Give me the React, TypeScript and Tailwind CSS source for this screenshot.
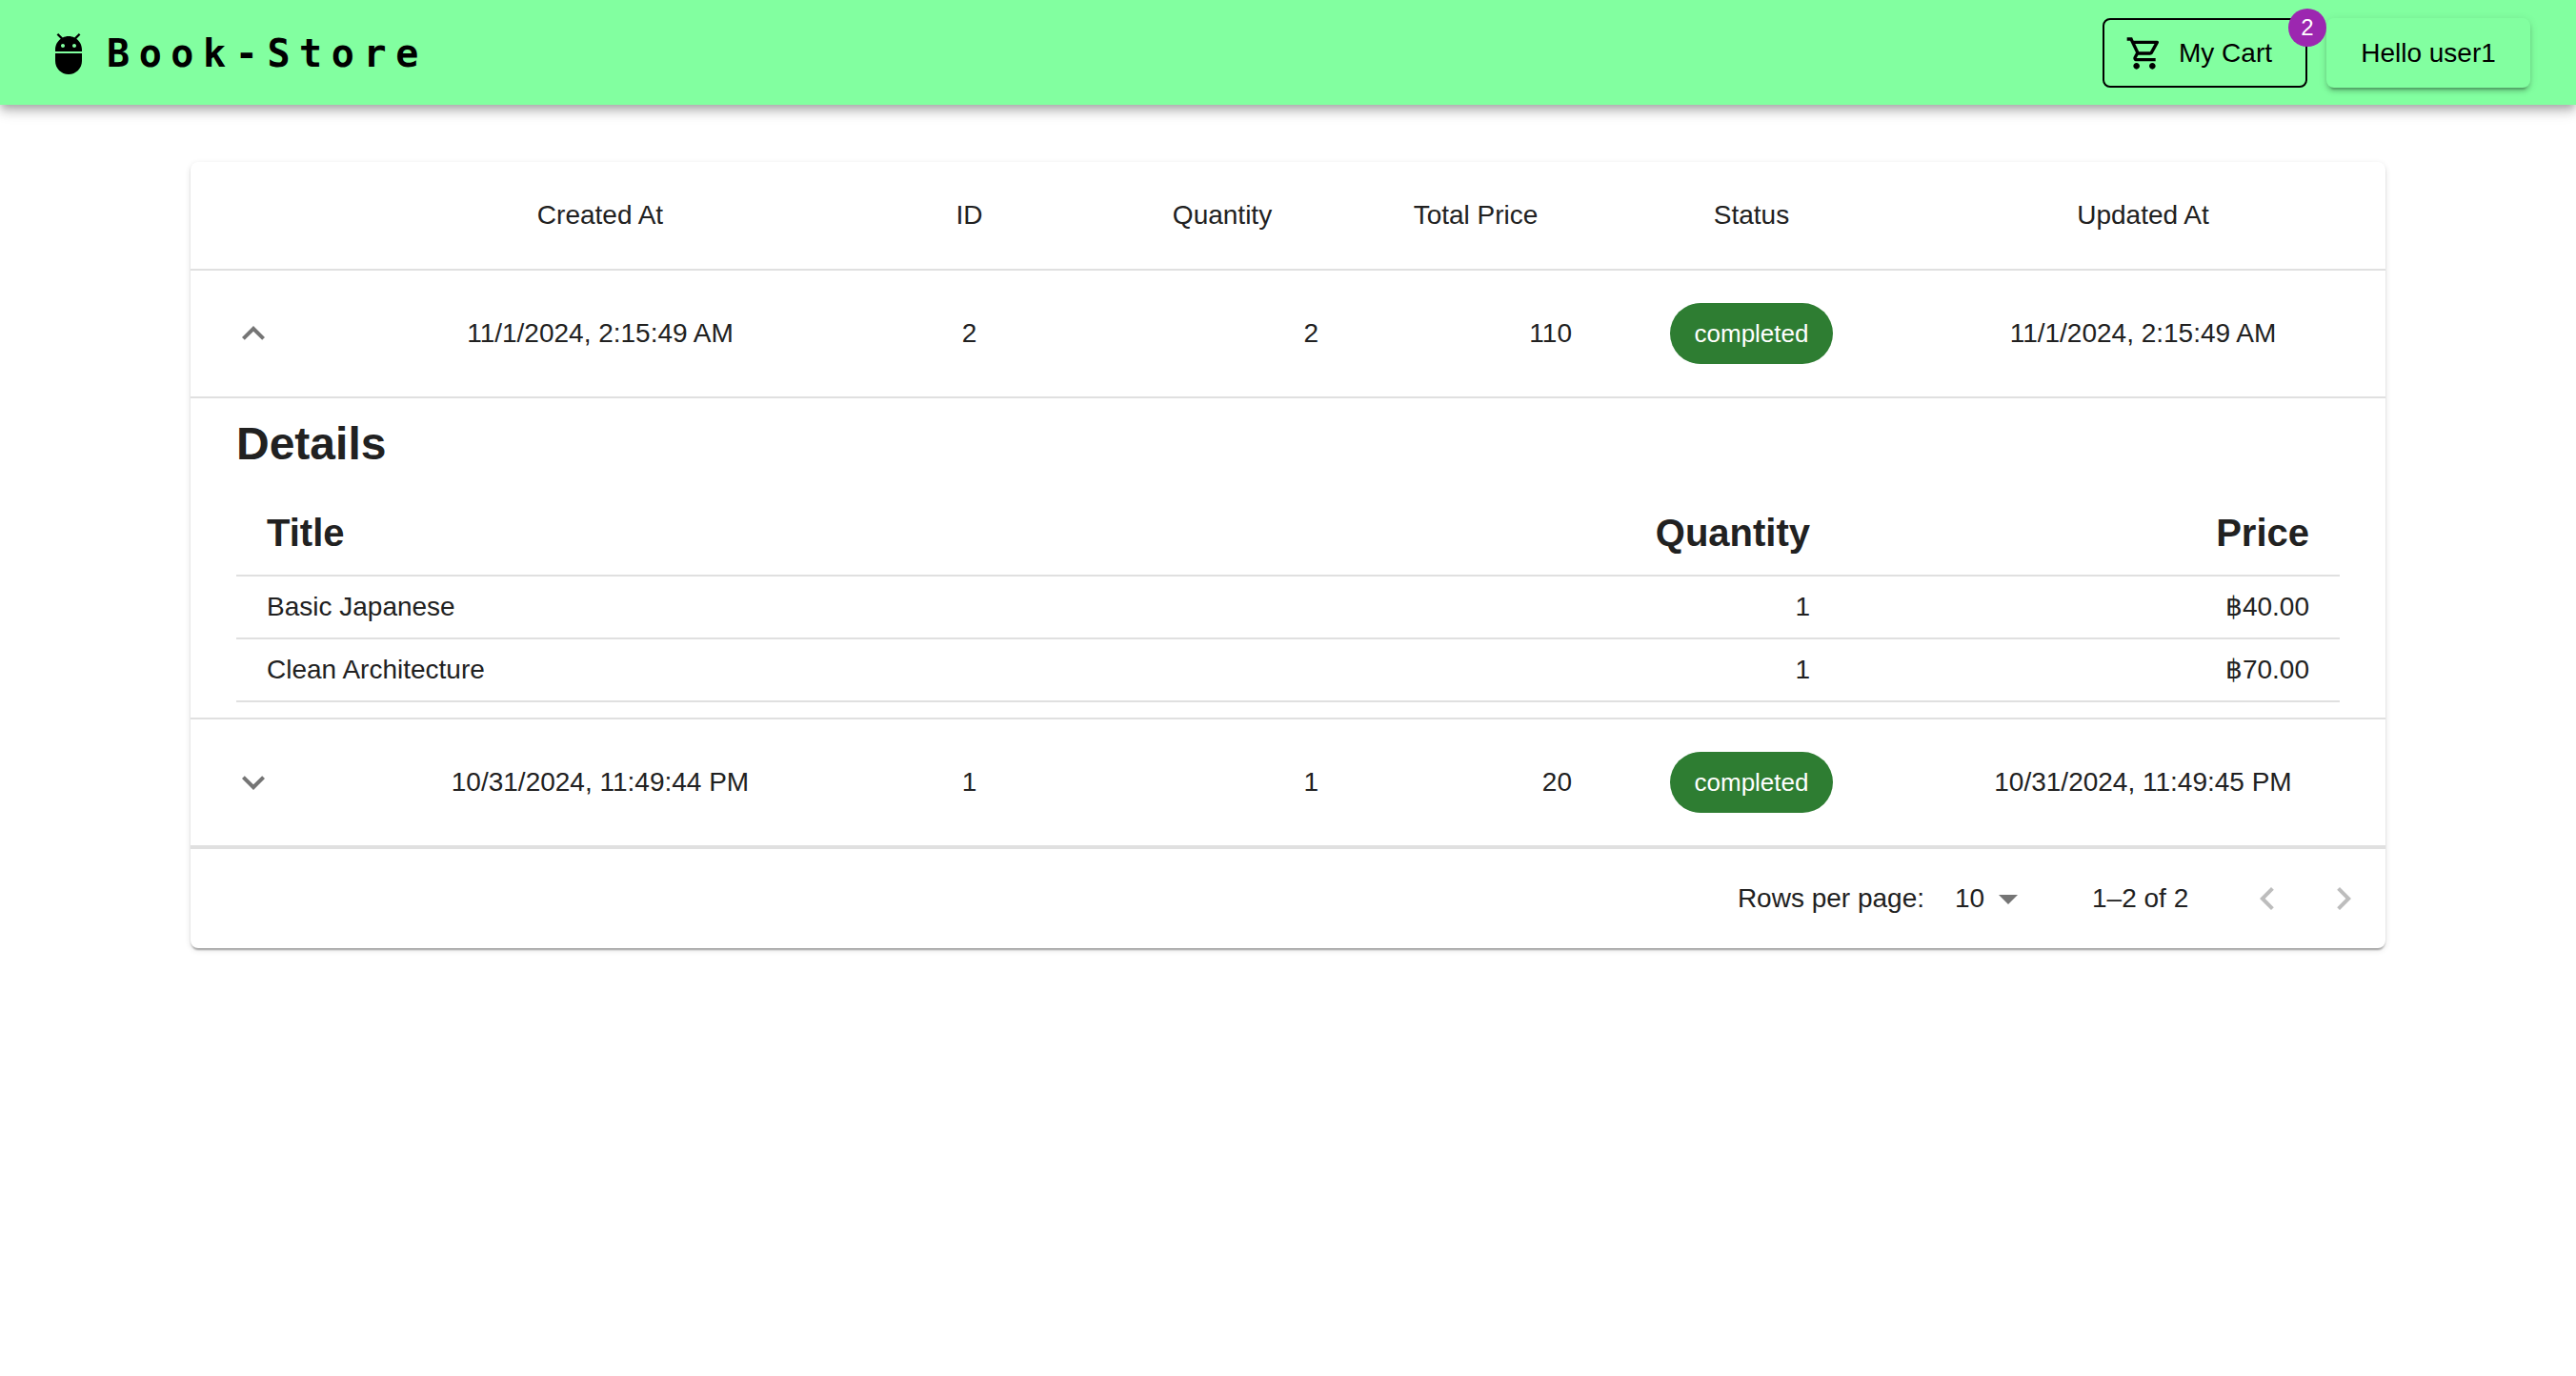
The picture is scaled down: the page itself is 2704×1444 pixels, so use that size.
import { Fragment, useState } from "react";
import {
  MdAdb,
  MdArrowDropDown,
  MdKeyboardArrowDown,
  MdKeyboardArrowLeft,
  MdKeyboardArrowRight,
  MdKeyboardArrowUp,
  MdOutlineShoppingCart,
} from "react-icons/md";

type Item = { title: string; quantity: number; price: string };
type Order = {
  id: number;
  createdAt: string;
  updatedAt: string;
  quantity: number;
  total: number;
  status: string;
  items: Item[];
};

const orders: Order[] = [
  {
    id: 2,
    createdAt: "11/1/2024, 2:15:49 AM",
    updatedAt: "11/1/2024, 2:15:49 AM",
    quantity: 2,
    total: 110,
    status: "completed",
    items: [
      { title: "Basic Japanese", quantity: 1, price: "฿40.00" },
      { title: "Clean Architecture", quantity: 1, price: "฿70.00" },
    ],
  },
  {
    id: 1,
    createdAt: "10/31/2024, 11:49:44 PM",
    updatedAt: "10/31/2024, 11:49:45 PM",
    quantity: 1,
    total: 20,
    status: "completed",
    items: [],
  },
];

function Header() {
  return (
    <header className="flex h-[110px] items-center justify-between bg-[#82ffa0] px-12 pt-px text-black shadow-[0_4px_8px_-2px_rgba(0,0,0,0.2),0_8px_10px_0_rgba(0,0,0,0.14),0_2px_20px_0_rgba(0,0,0,0.12)]">
      <a href="#" className="flex items-center gap-4">
        <MdAdb className="size-12" />
        <span className="font-['DejaVu_Sans_Mono',monospace] text-[40px] leading-[64px] font-bold tracking-[0.24em]">
          Book-Store
        </span>
      </a>
      <div className="flex items-center gap-5">
        <div className="relative">
          <button
            type="button"
            className="flex h-[73px] w-[215px] items-center gap-4 rounded-lg border-2 border-black pl-[22px] text-[28px]"
          >
            <MdOutlineShoppingCart className="size-10" />
            My Cart
          </button>
          <span className="absolute -top-[10px] -right-5 flex size-10 items-center justify-center rounded-full bg-[#9c27b0] text-2xl text-white">
            2
          </span>
        </div>
        <button
          type="button"
          className="h-[73px] w-[214px] rounded-lg bg-[#82ffa0] text-[28px] shadow-[0_6px_2px_-4px_rgba(0,0,0,0.2),0_4px_4px_0_rgba(0,0,0,0.14),0_2px_10px_0_rgba(0,0,0,0.12)]"
        >
          Hello user1
        </button>
      </div>
    </header>
  );
}

function Details({ items }: { items: Item[] }) {
  return (
    <div className="px-4 pt-4 pb-4">
      <h2 className="mb-[17px] text-5xl leading-[64px] font-bold">Details</h2>
      <table className="w-full table-fixed border-separate border-spacing-0">
        <colgroup>
          <col className="w-[1100px]" />
          <col className="w-[584px]" />
          <col className="w-[524px]" />
        </colgroup>
        <thead>
          <tr className="text-[40px] leading-[64px] *:border-b-2 *:border-[#e0e0e0] *:px-8 *:py-3 *:font-bold">
            <th scope="col" className="text-left">Title</th>
            <th scope="col" className="text-right">Quantity</th>
            <th scope="col" className="text-right">Price</th>
          </tr>
        </thead>
        <tbody>
          {items.map((item) => (
            <tr
              key={item.title}
              className="leading-10 *:border-b-2 *:border-[#e0e0e0] *:px-8 *:py-3"
            >
              <td>{item.title}</td>
              <td className="text-right">{item.quantity}</td>
              <td className="text-right">{item.price}</td>
            </tr>
          ))}
        </tbody>
      </table>
    </div>
  );
}

function Orders() {
  const [openId, setOpenId] = useState<number | null>(2);
  return (
    <table className="w-full table-fixed border-separate border-spacing-0">
      <colgroup>
        <col className="w-[175px]" />
        <col className="w-[510px]" />
        <col className="w-[265px]" />
        <col className="w-[266px]" />
        <col className="w-[266px]" />
        <col className="w-[313px]" />
        <col className="w-[509px]" />
      </colgroup>
      <thead>
        <tr className="leading-[48px] *:border-b-2 *:border-[#e0e0e0] *:p-8 *:text-center *:font-normal">
          <td />
          <th scope="col">Created At</th>
          <th scope="col">ID</th>
          <th scope="col">Quantity</th>
          <th scope="col">Total Price</th>
          <th scope="col">Status</th>
          <th scope="col">Updated At</th>
        </tr>
      </thead>
      <tbody>
        {orders.map((order) => {
          const open = order.id === openId;
          return (
            <Fragment key={order.id}>
              <tr className="leading-10 *:border-b-2 *:border-[#e0e0e0] *:px-8 *:py-8">
                <td>
                  <button
                    type="button"
                    aria-label={open ? "Collapse order" : "Expand order"}
                    aria-expanded={open}
                    onClick={() => setOpenId(open ? null : order.id)}
                    className="flex size-[68px] items-center justify-center rounded-full text-[#757575]"
                  >
                    {open ? (
                      <MdKeyboardArrowUp className="size-12" />
                    ) : (
                      <MdKeyboardArrowDown className="size-12" />
                    )}
                  </button>
                </td>
                <td className="text-center">{order.createdAt}</td>
                <td className="text-center">{order.id}</td>
                <td className="text-right">{order.quantity}</td>
                <td className="text-right">{order.total}</td>
                <td>
                  <span className="mx-auto flex h-16 w-fit items-center rounded-full bg-[#2e7d32] px-[26px] text-[26px] text-white">
                    {order.status}
                  </span>
                </td>
                <td className="text-center">{order.updatedAt}</td>
              </tr>
              {open && (
                <tr>
                  <td colSpan={7} className="border-b-2 border-[#e0e0e0] px-8">
                    <Details items={order.items} />
                  </td>
                </tr>
              )}
            </Fragment>
          );
        })}
      </tbody>
    </table>
  );
}

function Pagination() {
  return (
    <div className="flex h-[106px] items-center justify-end border-t-2 border-[#e0e0e0] pr-1 leading-10">
      <label htmlFor="rows-per-page">Rows per page:</label>
      <div className="relative mr-16 ml-4 flex items-center">
        <select
          id="rows-per-page"
          defaultValue="10"
          className="h-12 w-24 appearance-none bg-transparent pr-12 pl-4"
        >
          <option>5</option>
          <option>10</option>
          <option>25</option>
        </select>
        <MdArrowDropDown className="pointer-events-none absolute right-0 size-12 text-[#757575]" />
      </div>
      <span className="mr-10 min-w-[104px]">1–2 of 2</span>
      <button type="button" disabled aria-label="Previous page" className="p-4 text-[#bdbdbd]">
        <MdKeyboardArrowLeft className="size-12" />
      </button>
      <button type="button" disabled aria-label="Next page" className="p-4 text-[#bdbdbd]">
        <MdKeyboardArrowRight className="size-12" />
      </button>
    </div>
  );
}

export default function App() {
  return (
    <div className="min-h-screen bg-white font-['Liberation_Sans',Arial,sans-serif] text-[28px] text-[#212121]">
      <Header />
      <main className="mx-auto w-full max-w-[2400px] px-12 py-[60px]">
        <section className="rounded-lg bg-white shadow-[0_4px_2px_-2px_rgba(0,0,0,0.2),0_2px_2px_0_rgba(0,0,0,0.14),0_2px_6px_0_rgba(0,0,0,0.12)]">
          <Orders />
          <Pagination />
        </section>
      </main>
    </div>
  );
}
